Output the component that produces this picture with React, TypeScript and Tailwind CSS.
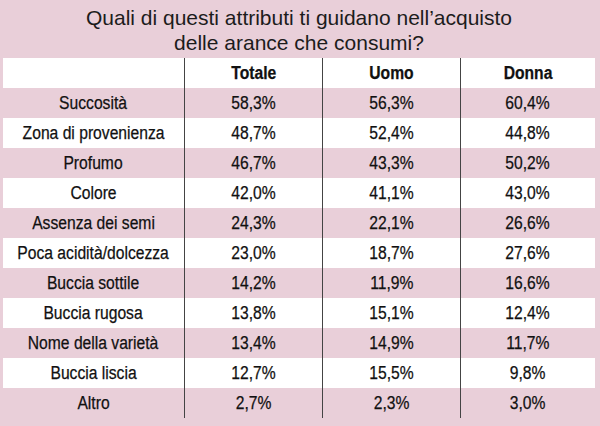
import React from 'react';

const rows: [string, string, string, string][] = [
  ['Succosità', '58,3%', '56,3%', '60,4%'],
  ['Zona di provenienza', '48,7%', '52,4%', '44,8%'],
  ['Profumo', '46,7%', '43,3%', '50,2%'],
  ['Colore', '42,0%', '41,1%', '43,0%'],
  ['Assenza dei semi', '24,3%', '22,1%', '26,6%'],
  ['Poca acidità/dolcezza', '23,0%', '18,7%', '27,6%'],
  ['Buccia sottile', '14,2%', '11,9%', '16,6%'],
  ['Buccia rugosa', '13,8%', '15,1%', '12,4%'],
  ['Nome della varietà', '13,4%', '14,9%', '11,7%'],
  ['Buccia liscia', '12,7%', '15,5%', '9,8%'],
  ['Altro', '2,7%', '2,3%', '3,0%'],
];

const sans = { fontFamily: '"Liberation Sans", Arial, sans-serif' };

// condensed look: Liberation Sans squeezed horizontally
const Cell = ({ children, divider = true }: { children?: React.ReactNode; divider?: boolean }) => (
  <div className={'flex items-center justify-center ' + (divider ? 'border-r border-[#444]' : '')}>
    <span className="inline-block scale-x-[0.87] whitespace-nowrap [-webkit-text-stroke:0.25px_#111]">{children}</span>
  </div>
);

export default function App() {
  return (
    <div className="w-[600px] h-[426px] bg-[#e9cfd9] pl-[3px] pr-[5px] overflow-hidden" style={sans}>
      <div className="h-[58px] flex flex-col items-center justify-center text-[21px] leading-[25px] text-[#1c1c1c] pt-[2px]">
        <div>Quali di questi attributi ti guidano nell’acquisto</div>
        <div>delle arance che consumi?</div>
      </div>
      <div className="flex flex-col text-[#111]">
        <div className="grid grid-cols-[182px_138px_138px_134px] h-[30px] bg-white font-bold text-[18px]">
          <Cell />
          <Cell>Totale</Cell>
          <Cell>Uomo</Cell>
          <Cell divider={false}>Donna</Cell>
        </div>
        {rows.map((r, i) => (
          <div
            key={r[0]}
            className={
              'grid grid-cols-[182px_138px_138px_134px] h-[30px] text-[18px] ' +
              (i % 2 === 0 ? 'bg-[#e9cfd9]' : 'bg-white')
            }
          >
            <Cell>{r[0]}</Cell>
            <Cell>{r[1]}</Cell>
            <Cell>{r[2]}</Cell>
            <Cell divider={false}>{r[3]}</Cell>
          </div>
        ))}
      </div>
    </div>
  );
}
